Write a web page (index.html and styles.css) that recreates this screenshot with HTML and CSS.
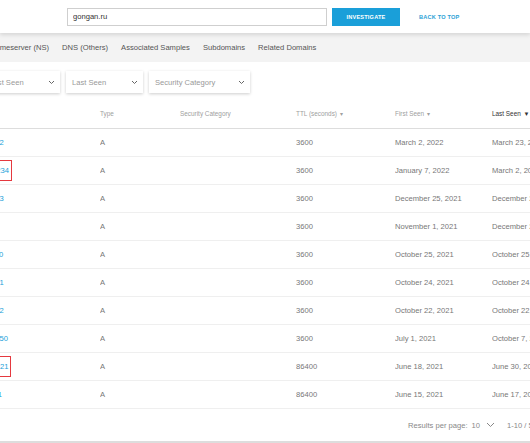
FILE: index.html
```html
<!DOCTYPE html>
<html lang="en">
<head>
    <meta charset="UTF-8">
    <title>gongan.ru - DNS Records</title>
    <link rel="stylesheet" href="styles.css">
</head>
<body>

<header class="topbar">
    <input class="search" type="text" value="gongan.ru">
    <button class="investigate">INVESTIGATE</button>
    <a class="back-top" href="#">BACK TO TOP</a>
</header>

<main class="page">
    <nav class="tabs">
        <a href="#">Nameserver (NS)</a>
        <a href="#">DNS (Others)</a>
        <a href="#">Associated Samples</a>
        <a href="#">Subdomains</a>
        <a href="#">Related Domains</a>
    </nav>

    <div class="filters">
        <div class="select">First Seen <svg width="7" height="5" viewBox="0 0 7 5"><path d="M1 1l2.5 2.5L6 1" fill="none" stroke="#666" stroke-width="1"/></svg></div>
        <div class="select">Last Seen <svg width="7" height="5" viewBox="0 0 7 5"><path d="M1 1l2.5 2.5L6 1" fill="none" stroke="#666" stroke-width="1"/></svg></div>
        <div class="select wide">Security Category <svg width="7" height="5" viewBox="0 0 7 5"><path d="M1 1l2.5 2.5L6 1" fill="none" stroke="#666" stroke-width="1"/></svg></div>
    </div>

    <table class="records">
        <colgroup>
            <col class="c-ip"><col class="c-type"><col class="c-cat"><col class="c-ttl"><col class="c-first"><col>
        </colgroup>
        <thead>
            <tr>
                <th>IP Address</th>
                <th>Type</th>
                <th>Security Category</th>
                <th>TTL (seconds) <span class="sort">&#9662;</span></th>
                <th>First Seen <span class="sort">&#9662;</span></th>
                <th class="sorted">Last Seen <span class="sort">&#9660;</span></th>
            </tr>
        </thead>
        <tbody>
            <tr><td><a href="#">172.67.182.172</a></td><td>A</td><td></td><td>3600</td><td>March 2, 2022</td><td>March 23, 2022</td></tr>
            <tr><td><a class="flag" href="#">185.230.163.234</a></td><td>A</td><td></td><td>3600</td><td>January 7, 2022</td><td>March 2, 2022</td></tr>
            <tr><td><a href="#">104.18.126.123</a></td><td>A</td><td></td><td>3600</td><td>December 25, 2021</td><td>December 28, 2021</td></tr>
            <tr><td><a href="#">23.227.38.65</a></td><td>A</td><td></td><td>3600</td><td>November 1, 2021</td><td>December 25, 2021</td></tr>
            <tr><td><a href="#">104.21.112.150</a></td><td>A</td><td></td><td>3600</td><td>October 25, 2021</td><td>October 25, 2021</td></tr>
            <tr><td><a href="#">172.67.201.161</a></td><td>A</td><td></td><td>3600</td><td>October 24, 2021</td><td>October 24, 2021</td></tr>
            <tr><td><a href="#">104.21.172.142</a></td><td>A</td><td></td><td>3600</td><td>October 22, 2021</td><td>October 22, 2021</td></tr>
            <tr><td><a href="#">185.199.108.150</a></td><td>A</td><td></td><td>3600</td><td>July 1, 2021</td><td>October 7, 2021</td></tr>
            <tr><td><a class="flag" href="#">185.199.110.121</a></td><td>A</td><td></td><td>86400</td><td>June 18, 2021</td><td>June 30, 2021</td></tr>
            <tr><td><a href="#">185.199.111.11</a></td><td>A</td><td></td><td>86400</td><td>June 15, 2021</td><td>June 17, 2021</td></tr>
        </tbody>
    </table>

    <div class="pager">
        <span>Results per page:</span>
        <span class="per-page">10</span>
        <svg class="pager-chevron" width="9" height="6" viewBox="0 0 9 6"><path d="M1 1l3.5 3.5L8 1" fill="none" stroke="#888" stroke-width="1"/></svg>
        <span class="range">1-10 / 57</span>
    </div>
</main>

</body>
</html>
```

FILE: styles.css
```css
body { margin: 0; font-family: "Liberation Sans", Arial, sans-serif; background: #fff; overflow: hidden; }
a { text-decoration: none; }

.topbar { display: flex; align-items: center; height: 33px; padding-left: 67px; background: #fff; box-shadow: 0 2px 4px rgba(0, 0, 0, 0.12); position: relative; z-index: 1; }
.search { width: 260px; height: 18px; box-sizing: border-box; margin: 0; border: 1px solid #cfcfcf; padding: 0 5px; font-family: inherit; font-size: 7.6px; color: #333; }
.investigate { margin-left: 5px; width: 68px; height: 18px; padding: 0; background: #1a9fd9; border: none; color: #fff; font-family: inherit; font-weight: bold; font-size: 5.6px; letter-spacing: 0.2px; }
.back-top { margin-left: 19px; color: #2a9fd6; font-weight: bold; font-size: 5.6px; letter-spacing: 0.2px; }

.page { margin-left: -60px; width: 640px; }

.tabs { display: flex; align-items: center; gap: 13px; height: 29px; padding-left: 50px; background: #f3f3f3; font-size: 7.6px; }
.tabs a { color: #555; }

.filters { display: flex; gap: 6px; padding: 9px 0 6px 43px; }
.select { display: flex; align-items: center; justify-content: space-between; width: 77px; height: 22px; box-sizing: border-box; padding: 0 5px 0 6px; background: #fff; box-shadow: 0 1px 3px rgba(0, 0, 0, 0.2); color: #999; font-size: 7.6px; }
.select.wide { width: 101px; }

.records { width: 640px; border-collapse: collapse; table-layout: fixed; }
.c-ip { width: 160px; }
.c-type { width: 80px; }
.c-cat { width: 116px; }
.c-ttl { width: 99px; }
.c-first { width: 97px; }
.records th { height: 29px; padding: 0; border-bottom: 1px solid #ddd; text-align: left; font-weight: normal; font-size: 6.4px; color: #a0a0a0; white-space: nowrap; }
.records th.sorted { color: #333; }
.records td { height: 27px; padding: 0; border-bottom: 1px solid #efefef; font-size: 7.6px; color: #777; white-space: nowrap; overflow: hidden; }
.records th:first-child, .records td:first-child { padding-left: 11px; }
.records td a { color: #1a9fd9; }
.sort { font-size: 6px; margin-left: 1px; }
.flag { display: inline-block; padding: 5px 2px 5px 0; border: 1px solid #e5393f; }

.pager { display: flex; align-items: center; height: 32px; padding-left: 468px; border-bottom: 2px solid #ddd; font-size: 7.6px; color: #888; }
.per-page { margin-left: 4px; }
.pager-chevron { margin-left: 6px; }
.range { margin-left: 12px; }
```
